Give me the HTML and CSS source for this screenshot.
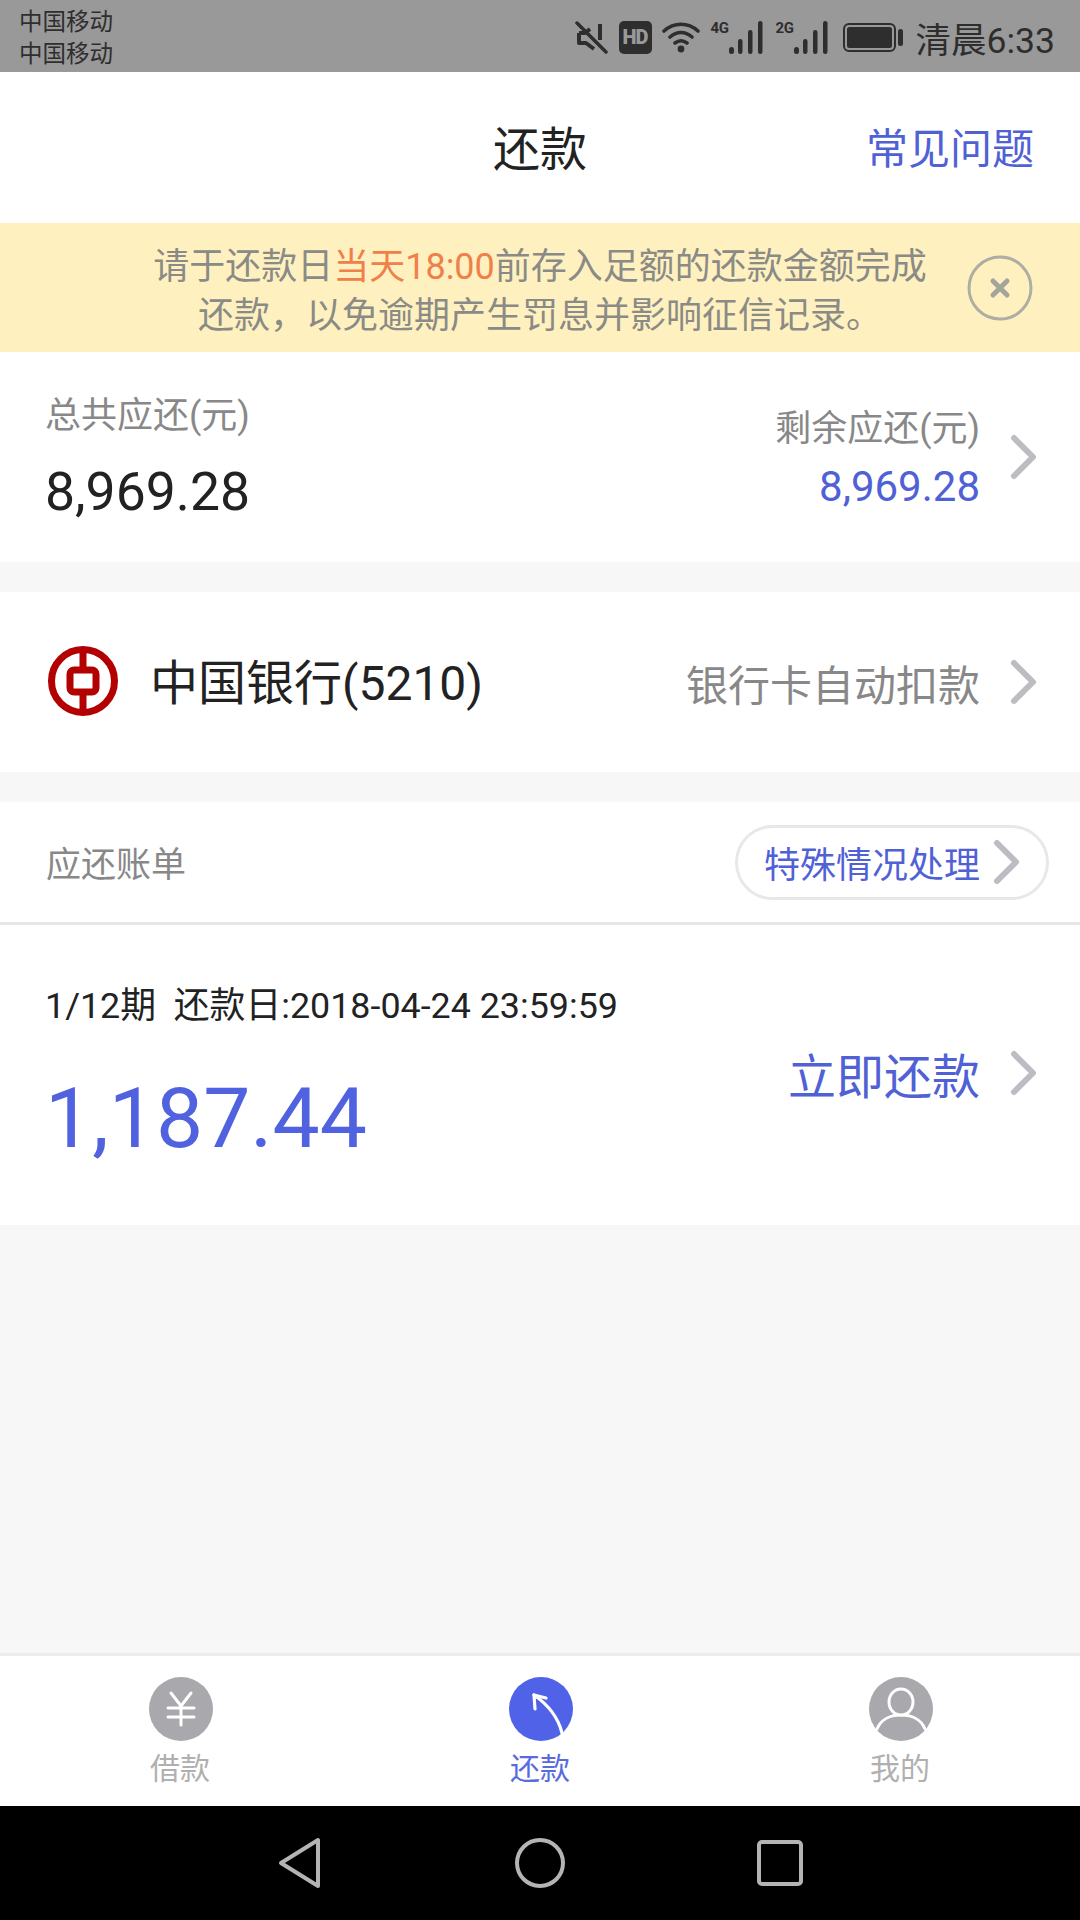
FILE: index.html
```html
<!DOCTYPE html>
<html lang="zh-CN">
<head>
  <meta charset="UTF-8">
  <meta name="viewport" content="width=device-width, initial-scale=1.0">
  <title>还款</title>
  <link rel="stylesheet" href="styles.css">
</head>
<body>
  <!-- Status Bar -->
  <div class="status-bar">
    <div class="carriers">
      <div>中国移动</div>
      <div>中国移动</div>
    </div>
    <div class="status-right">
      <svg class="ic-mute" width="33" height="33" viewBox="0 0 33 33">
        <path d="M4 12h6l5-4M25 3v16M4 12v10h7l8 6" fill="none" stroke="#2e2e2e" stroke-width="4" stroke-linejoin="round"/>
        <path d="M2 2l29 29" stroke="#2e2e2e" stroke-width="3.5" stroke-linecap="round"/>
      </svg>
      <div class="hd-badge">HD</div>
      <svg class="ic-wifi" width="38" height="32" viewBox="0 0 38 32">
        <path d="M2 10c10-9 24-9 34 0M8 16c7-6 15-6 22 0M13 22c4-3 8-3 12 0" fill="none" stroke="#2e2e2e" stroke-width="3.6" stroke-linecap="round"/>
        <circle cx="19" cy="28" r="3.4" fill="#2e2e2e"/>
      </svg>
      <div class="signal">
        <span class="net-label">4G</span>
        <svg width="34" height="33" viewBox="0 0 34 33">
          <rect x="0" y="26" width="5" height="7" rx="2.5" fill="#2e2e2e"/>
          <rect x="9" y="18" width="4.5" height="15" rx="2.2" fill="#2e2e2e"/>
          <rect x="19" y="9" width="4.5" height="24" rx="2.2" fill="#2e2e2e"/>
          <rect x="29" y="0" width="4.5" height="33" rx="2.2" fill="#2e2e2e"/>
        </svg>
      </div>
      <div class="signal">
        <span class="net-label">2G</span>
        <svg width="34" height="33" viewBox="0 0 34 33">
          <rect x="0" y="26" width="5" height="7" rx="2.5" fill="#2e2e2e"/>
          <rect x="9" y="18" width="4.5" height="15" rx="2.2" fill="#2e2e2e"/>
          <rect x="19" y="9" width="4.5" height="24" rx="2.2" fill="#2e2e2e"/>
          <rect x="29" y="0" width="4.5" height="33" rx="2.2" fill="#2e2e2e"/>
        </svg>
      </div>
      <svg class="ic-battery" width="60" height="29" viewBox="0 0 60 29">
        <rect x="1" y="1" width="51" height="27" rx="5" fill="none" stroke="#2e2e2e" stroke-width="2"/>
        <rect x="4" y="4" width="45" height="21" rx="2.5" fill="#2e2e2e"/>
        <rect x="55" y="6" width="5" height="17" rx="2.5" fill="#2e2e2e"/>
      </svg>
      <div class="clock">清晨6:33</div>
    </div>
  </div>

  <!-- Title Bar -->
  <nav class="title-bar">
    <div></div>
    <h1>还款</h1>
    <a href="#faq" class="faq-link">常见问题</a>
  </nav>

  <!-- Notice -->
  <div class="notice">
    <div></div>
    <p>请于还款日<span class="notice-hl">当天18:00</span>前存入足额的还款金额完成<br>还款，以免逾期产生罚息并影响征信记录。</p>
    <svg class="notice-close" width="66" height="66" viewBox="0 0 66 66">
      <circle cx="33" cy="33" r="31" fill="none" stroke="#b0aea4" stroke-width="3"/>
      <path d="M26 26l14 14M40 26l-14 14" stroke="#a5a49c" stroke-width="5" stroke-linecap="round"/>
    </svg>
  </div>

  <!-- Summary -->
  <section class="summary">
    <div class="summary-left">
      <div class="label">总共应还(元)</div>
      <div class="total">8,969.28</div>
    </div>
    <div class="summary-right">
      <div class="label">剩余应还(元)</div>
      <div class="remain">8,969.28</div>
    </div>
    <svg class="chevron" width="27" height="46" viewBox="0 0 27 46"><path d="M4 4l19 19L4 42" fill="none" stroke="#bcbcc2" stroke-width="6" stroke-linecap="round" stroke-linejoin="round"/></svg>
  </section>

  <!-- Bank Card -->
  <section class="bank">
    <svg class="bank-logo" width="72" height="72" viewBox="0 0 72 72">
      <circle cx="36" cy="36" r="31.5" fill="none" stroke="#b30000" stroke-width="7"/>
      <rect x="32.5" y="3" width="7" height="66" fill="#b30000"/>
      <rect x="23" y="25" width="26" height="22" rx="4" fill="#fff" stroke="#b30000" stroke-width="7"/>
    </svg>
    <div class="bank-name">中国银行(5210)</div>
    <div class="bank-hint">银行卡自动扣款</div>
    <svg class="chevron" width="27" height="46" viewBox="0 0 27 46"><path d="M4 4l19 19L4 42" fill="none" stroke="#bcbcc2" stroke-width="6" stroke-linecap="round" stroke-linejoin="round"/></svg>
  </section>

  <!-- Bill Header -->
  <section class="bill-head">
    <div class="label">应还账单</div>
    <a href="#special" class="pill">
      特殊情况处理
      <svg width="27" height="46" viewBox="0 0 27 46"><path d="M4 4l19 19L4 42" fill="none" stroke="#bcbcc2" stroke-width="6" stroke-linecap="round" stroke-linejoin="round"/></svg>
    </a>
  </section>

  <!-- Bill Row -->
  <section class="bill-row">
    <div class="bill-info">
      <div class="bill-date">1/12期&nbsp; 还款日:2018-04-24 23:59:59</div>
      <div class="bill-amount">1,187.44</div>
    </div>
    <div class="pay-now">立即还款</div>
    <svg class="chevron" width="27" height="46" viewBox="0 0 27 46"><path d="M4 4l19 19L4 42" fill="none" stroke="#bcbcc2" stroke-width="6" stroke-linecap="round" stroke-linejoin="round"/></svg>
  </section>

  <div class="spacer"></div>

  <!-- Tab Bar -->
  <footer class="tab-bar">
    <a href="#loan" class="tab">
      <svg width="64" height="64" viewBox="0 0 64 64">
        <circle cx="32" cy="32" r="32" fill="#a8a8ad"/>
        <path d="M22 16l10 13 10-13M19 31h26M19 40h26M32 29v19" fill="none" stroke="#fff" stroke-width="3" stroke-linecap="round" stroke-linejoin="round"/>
      </svg>
      <span>借款</span>
    </a>
    <a href="#repay" class="tab active">
      <svg width="64" height="64" viewBox="0 0 64 64">
        <circle cx="32" cy="32" r="32" fill="#5062e8"/>
        <path d="M53 56C49 40 38 27 25 18" fill="none" stroke="#fff" stroke-width="3.2" stroke-linecap="round"/>
        <path d="M37 21L25 18 26 32" fill="none" stroke="#fff" stroke-width="3.2" stroke-linecap="round" stroke-linejoin="round"/>
      </svg>
      <span>还款</span>
    </a>
    <a href="#mine" class="tab">
      <svg width="64" height="64" viewBox="0 0 64 64">
        <circle cx="32" cy="32" r="32" fill="#a8a8ad"/>
        <path d="M8 52C12 42 22 38 32 38S52 42 56 52" fill="none" stroke="#fff" stroke-width="3" stroke-linecap="round"/>
        <ellipse cx="32" cy="25" rx="12" ry="13" fill="#a8a8ad" stroke="#fff" stroke-width="3"/>
      </svg>
      <span>我的</span>
    </a>
  </footer>

  <!-- Android Nav -->
  <div class="android-nav">
    <svg width="44" height="52" viewBox="0 0 44 52"><path d="M40 3v46L3 26z" fill="none" stroke="#b4b4b4" stroke-width="4" stroke-linejoin="round"/></svg>
    <svg width="52" height="52" viewBox="0 0 52 52"><circle cx="26" cy="26" r="23" fill="none" stroke="#b4b4b4" stroke-width="4"/></svg>
    <svg width="46" height="46" viewBox="0 0 46 46"><rect x="2" y="2" width="42" height="42" rx="3" fill="none" stroke="#b4b4b4" stroke-width="4"/></svg>
  </div>
</body>
</html>
```

FILE: styles.css
```css
/* General Styles */
* {
  box-sizing: border-box;
}

body {
  margin: 0;
  width: 1080px;
  height: 1920px;
  display: flex;
  flex-direction: column;
  background-color: #f7f7f7;
  color: #222222;
  font-family: Roboto, "Noto Sans CJK SC", sans-serif;
}

a {
  text-decoration: none;
  color: inherit;
}

svg {
  display: block;
  flex-shrink: 0;
}

/* Status Bar */
.status-bar {
  height: 72px;
  background-color: #999999;
  color: #2e2e2e;
  display: flex;
  justify-content: space-between;
  align-items: center;
  padding: 0 25px 0 19px;
}

.carriers {
  margin-top: 4px;
  font-size: 23.5px;
  line-height: 32px;
}

.status-right {
  display: flex;
  align-items: center;
  margin-top: 2px;
}

.ic-mute {
  margin-right: 11px;
}

.hd-badge {
  width: 33px;
  height: 33px;
  margin-right: 10px;
  border-radius: 5px;
  background-color: #2e2e2e;
  color: #999999;
  font-size: 20px;
  font-weight: 900;
  line-height: 33px;
  text-align: center;
  letter-spacing: -1px;
}

.ic-wifi {
  margin-right: 11px;
}

.signal {
  width: 52px;
  height: 33px;
  margin-right: 13px;
  display: flex;
  justify-content: space-between;
}

.net-label {
  width: 18px;
  font-size: 15px;
  font-weight: 700;
  line-height: 15px;
  letter-spacing: -0.5px;
}

.ic-battery {
  margin-left: 2px;
  margin-right: 13px;
}

.clock {
  font-size: 35.5px;
}

/* Title Bar */
.title-bar {
  height: 151px;
  background-color: #ffffff;
  display: grid;
  grid-template-columns: 1fr auto 1fr;
  align-items: center;
  padding: 0 46px 5px;
}

.title-bar h1 {
  margin: 0;
  font-size: 47px;
  font-weight: 400;
}

.faq-link {
  justify-self: end;
  font-size: 42px;
  color: #5061d6;
}

/* Notice */
.notice {
  height: 129px;
  background-color: #fef1bf;
  display: grid;
  grid-template-columns: 1fr auto 1fr;
  align-items: center;
  padding: 0 47px;
  color: #8a8a86;
}

.notice p {
  margin: 0;
  padding-top: 8px;
  font-size: 36px;
  line-height: 49px;
  text-align: center;
}

.notice-hl {
  color: #f0804a;
}

.notice-close {
  justify-self: end;
}

/* Summary */
.summary,
.bank,
.bill-row {
  background-color: #ffffff;
  display: flex;
  align-items: center;
  padding: 0 43px 0 45px;
}

.summary {
  height: 210px;
  margin-bottom: 30px;
}

.label {
  font-size: 36px;
  color: #888888;
}

.summary-left {
  flex: 1;
  align-self: flex-start;
  padding-top: 34px;
}

.total {
  margin-top: 20px;
  font-size: 53.5px;
  line-height: 68px;
}

.summary-right {
  text-align: right;
  margin-right: 30px;
  padding-bottom: 3px;
}

.remain {
  margin-top: 11px;
  font-size: 42px;
  line-height: 50px;
  color: #5061d6;
}

/* Bank */
.bank {
  height: 180px;
  margin-bottom: 30px;
}

.bank-logo {
  margin: 0 31px 2px 2px;
}

.bank-name {
  flex: 1;
  padding-bottom: 6px;
  font-size: 48px;
}

.bank-hint {
  margin-right: 30px;
  font-size: 42px;
  color: #888888;
}

/* Bill Header */
.bill-head {
  height: 123px;
  background-color: #ffffff;
  border-bottom: 3px solid #e6e6e6;
  display: flex;
  justify-content: space-between;
  align-items: center;
  padding: 0 31px 0 46px;
}

.bill-head .label {
  padding-bottom: 2px;
  font-size: 35px;
}

.pill {
  width: 314px;
  height: 75px;
  padding-left: 26px;
  border: 3px solid #e8e8e8;
  border-radius: 38px;
  display: flex;
  align-items: center;
  gap: 13px;
  font-size: 36px;
  color: #5061d6;
}

/* Bill Row */
.bill-row {
  height: 300px;
}

.bill-info {
  flex: 1;
  padding-bottom: 2px;
}

.bill-date {
  font-size: 35.85px;
  line-height: 50px;
}

.bill-amount {
  margin-top: 40px;
  font-size: 84px;
  line-height: 96px;
  color: #5062e0;
}

.pay-now {
  margin-right: 30px;
  margin-bottom: 4px;
  font-size: 48px;
  color: #5061d6;
}

.bill-row .chevron {
  margin-bottom: 4px;
}

.spacer {
  flex: 1;
}

/* Tab Bar */
.tab-bar {
  height: 153px;
  background-color: #ffffff;
  border-top: 3px solid #ececec;
  display: grid;
  grid-template-columns: repeat(3, 360px);
}

.tab {
  display: flex;
  flex-direction: column;
  align-items: center;
  padding-top: 21px;
  gap: 8px;
  font-size: 30px;
  line-height: 40px;
  color: #b0b0b0;
}

.tab svg {
  margin-left: 2px;
}

.tab.active {
  color: #5a6be0;
}

/* Android Nav */
.android-nav {
  height: 114px;
  background-color: #000000;
  display: grid;
  grid-template-columns: repeat(3, 240px);
  justify-content: center;
  align-items: center;
  justify-items: center;
}
```
